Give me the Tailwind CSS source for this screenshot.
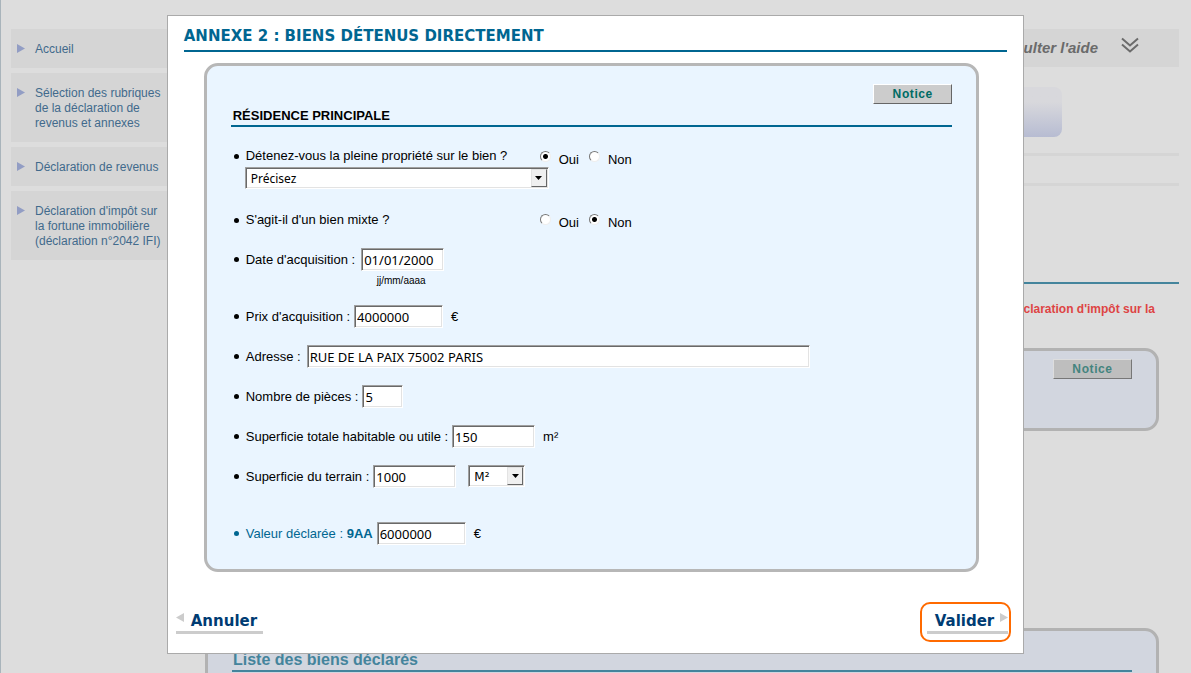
<!DOCTYPE html>
<html lang="fr">
<head>
<meta charset="utf-8">
<meta name="viewport" content="width=device-width, initial-scale=1">
<title>Annexe 2 : Biens détenus directement</title>
<script src="https://cdn.jsdelivr.net/npm/@tailwindcss/browser@4"></script>
</head>
<body class="h-screen overflow-hidden bg-[#ddd] font-['Liberation_Sans',Arial,sans-serif] text-[13px] leading-4 text-black">

<!-- Page behind the dialog -->
<div class="flex h-full gap-[18px] overflow-hidden border-l border-[#a9b4bb] pt-[29px] pr-3 pl-2.5">
  <nav class="w-44 shrink-0 text-[12px] leading-[15px] text-[#416a8c]" aria-label="Menu">
    <ul class="flex flex-col gap-[5px]">
      <li><a href="#" class="flex gap-2.5 bg-[#d5d5d5] pt-[13px] pr-2 pb-[11px] pl-1.5"><svg class="mt-0.5 h-[9px] w-2 shrink-0" viewBox="0 0 8 9"><path d="M0 0L8 4.500L0 9z" fill="#929dc4"/></svg><span>Accueil</span></a></li>
      <li><a href="#" class="flex gap-2.5 bg-[#d5d5d5] pt-[13px] pr-2 pb-[11px] pl-1.5"><svg class="mt-0.5 h-[9px] w-2 shrink-0" viewBox="0 0 8 9"><path d="M0 0L8 4.500L0 9z" fill="#929dc4"/></svg><span>Sélection des rubriques<br>de la déclaration de<br>revenus et annexes</span></a></li>
      <li><a href="#" class="flex gap-2.5 bg-[#d5d5d5] pt-[13px] pr-2 pb-[11px] pl-1.5"><svg class="mt-0.5 h-[9px] w-2 shrink-0" viewBox="0 0 8 9"><path d="M0 0L8 4.500L0 9z" fill="#929dc4"/></svg><span>Déclaration de revenus</span></a></li>
      <li><a href="#" class="flex gap-2.5 bg-[#d5d5d5] pt-[13px] pr-2 pb-[11px] pl-1.5"><svg class="mt-0.5 h-[9px] w-2 shrink-0" viewBox="0 0 8 9"><path d="M0 0L8 4.500L0 9z" fill="#929dc4"/></svg><span>Déclaration d'impôt sur<br>la fortune immobilière<br>(déclaration n°2042 IFI)</span></a></li>
    </ul>
  </nav>

  <main class="flex min-w-0 flex-1 flex-col">
    <div class="flex h-[38px] shrink-0 items-center justify-end gap-[23px] bg-[#d5d5d5] pr-10">
      <a href="#" class="text-[15px] font-bold italic text-[#6b6b6b]">Consulter l'aide</a>
      <svg class="-mt-1.5 h-4 w-[18px]" viewBox="0 0 18 16" fill="none" stroke="#6b6b6b" stroke-width="2"><path d="M1 1.500L9 8.500L17 1.500M1 7.500L9 14.500L17 7.500"/></svg>
    </div>
    <div class="mt-5 mr-[117px] h-[50px] shrink-0 rounded-lg bg-linear-to-b from-[#d8d8dc] from-30% to-[#b7bcd2]"></div>
    <div class="mt-4 h-[33px] shrink-0 border-y-3 border-[#d5d5d5]"></div>
    <div class="mt-[96px] h-0.5 shrink-0 bg-[#44849c]"></div>
    <p class="mt-[17px] pr-6 text-right text-[12px] font-bold text-[#de4444]">déclaration d'impôt sur la</p>
    <section class="mt-[31px] mr-5 flex h-[83px] shrink-0 items-start justify-end rounded-[14px] border-3 border-[#b2b2b2] bg-[#d2d6df] pt-2 pr-6">
      <button type="button" class="h-5 w-[79px] border border-t-[#ddd] border-r-[#777] border-b-[#777] border-l-[#ddd] bg-[#bebebe] text-[12px] leading-4 font-bold tracking-wider text-[#44847f]">Notice</button>
    </section>
    <section class="mt-[197px] mr-5 h-40 shrink-0 rounded-[14px] border-3 border-[#b2b2b2] bg-[#d2d6df] px-6 pt-5">
      <h2 class="border-b-2 border-[#44849c] pb-px pl-px text-[16px] leading-[18px] font-bold text-[#44849c]">Liste des biens déclarés</h2>
    </section>
  </main>
</div>

<!-- Dialog -->
<div class="fixed inset-0 flex items-start justify-center pt-[15px]">
  <form class="w-[72%] min-w-[600px] border border-[#aaa] bg-white pt-2.5" role="dialog" aria-labelledby="dialog-title">
    <h1 id="dialog-title" class="mx-4 border-b-2 border-[#006691] pb-1 font-['DejaVu_Sans',Verdana,sans-serif] text-[15px] leading-5 font-bold text-[#006691]">ANNEXE 2 : BIENS DÉTENUS DIRECTEMENT</h1>

    <section class="mt-[11px] mr-11 ml-9 rounded-[14px] border-3 border-[#b7b7b7] bg-[#eaf5ff] px-6 pt-[18px] pb-6">
      <div class="flex justify-end">
        <button type="button" class="h-5 w-[79px] border border-t-white border-r-[#666] border-b-[#666] border-l-white bg-[#ccc] text-[12px] leading-4 font-bold tracking-wider text-[#006b64]">Notice</button>
      </div>
      <h2 class="mt-1 border-b-2 border-[#006691] pb-px pl-0.5 text-[13px] leading-4 font-bold">RÉSIDENCE PRINCIPALE</h2>

      <div class="pl-[3px]">
        <fieldset class="mt-[21px] flex h-[19px] items-start">
          <span class="mt-1.5 mr-[7px] size-[5px] rounded-full bg-black"></span>
          <span class="w-[294px]">Détenez-vous la pleine propriété sur le bien ?</span>
          <input id="pp-oui" name="pp" type="radio" checked class="mt-[3px] size-[11px] appearance-none rounded-full border border-t-[#777] border-r-[#eee] border-b-[#eee] border-l-[#777] bg-white checked:bg-[radial-gradient(circle,#000_2px,#fff_3px)]">
          <label for="pp-oui" class="mt-1 ml-2">Oui</label>
          <input id="pp-non" name="pp" type="radio" class="mt-[3px] ml-2.5 size-[11px] appearance-none rounded-full border border-t-[#777] border-r-[#eee] border-b-[#eee] border-l-[#777] bg-white checked:bg-[radial-gradient(circle,#000_2px,#fff_3px)]">
          <label for="pp-non" class="mt-1 ml-2">Non</label>
        </fieldset>
        <div class="relative ml-[11px] h-[22px] w-[304px]">
          <select aria-label="Précisez" class="size-full appearance-none border border-t-[#a0a0a0] border-r-white border-b-white border-l-[#a0a0a0] bg-white pt-0.5 pl-[5px] font-['Noto_Sans',Tahoma,sans-serif] text-[12px] shadow-[inset_1px_1px_#696969,inset_-1px_-1px_#e3e3e3]"><option>Précisez</option></select>
          <span class="pointer-events-none absolute top-0.5 right-0.5 flex h-[18px] w-4 items-center justify-center border border-t-[#e3e3e3] border-r-[#666] border-b-[#666] border-l-[#e3e3e3] bg-[#f0f0f0]"><svg class="h-1 w-[7px]" viewBox="0 0 7 4"><path d="M0 0H7L3.500 4z"/></svg></span>
        </div>

        <fieldset class="mt-[23px] flex h-[19px] items-start">
          <span class="mt-1.5 mr-[7px] size-[5px] rounded-full bg-black"></span>
          <span class="w-[294px]">S'agit-il d'un bien mixte ?</span>
          <input id="mx-oui" name="mx" type="radio" class="mt-0.5 size-[11px] appearance-none rounded-full border border-t-[#777] border-r-[#eee] border-b-[#eee] border-l-[#777] bg-white checked:bg-[radial-gradient(circle,#000_2px,#fff_3px)]">
          <label for="mx-oui" class="mt-[3px] ml-2">Oui</label>
          <input id="mx-non" name="mx" type="radio" checked class="mt-0.5 ml-2.5 size-[11px] appearance-none rounded-full border border-t-[#777] border-r-[#eee] border-b-[#eee] border-l-[#777] bg-white checked:bg-[radial-gradient(circle,#000_2px,#fff_3px)]">
          <label for="mx-non" class="mt-[3px] ml-2">Non</label>
        </fieldset>

        <div class="mt-[17px] flex h-[23px] items-center">
          <span class="mr-[7px] size-[5px] rounded-full bg-black"></span>
          <label for="date" class="mr-1.5">Date d'acquisition :</label>
          <input id="date" value="01/01/2000" class="h-[23px] w-[83px] border border-t-[#a0a0a0] border-r-white border-b-white border-l-[#a0a0a0] bg-white pl-0.5 font-['Noto_Sans',Tahoma,sans-serif] text-[13px] shadow-[inset_1px_1px_#696969,inset_-1px_-1px_#e3e3e3]">
        </div>
        <p class="ml-[143px] h-[34px] pt-[3px] text-[10px] leading-[14px]">jj/mm/aaaa</p>

        <div class="flex flex-col gap-[17px]">
          <div class="flex h-[23px] items-center">
            <span class="mr-[7px] size-[5px] rounded-full bg-black"></span>
            <label for="prix" class="mr-1 pt-px">Prix d'acquisition :</label>
            <input id="prix" value="4000000" class="h-[23px] w-[89px] border border-t-[#a0a0a0] border-r-white border-b-white border-l-[#a0a0a0] bg-white pl-0.5 font-['Noto_Sans',Tahoma,sans-serif] text-[13px] shadow-[inset_1px_1px_#696969,inset_-1px_-1px_#e3e3e3]">
            <span class="ml-2">€</span>
          </div>
          <div class="flex h-[23px] items-center">
            <span class="mr-[7px] size-[5px] rounded-full bg-black"></span>
            <label for="adresse" class="mr-1.5">Adresse :</label>
            <input id="adresse" value="RUE DE LA PAIX 75002 PARIS" class="h-[23px] w-[503px] border border-t-[#a0a0a0] border-r-white border-b-white border-l-[#a0a0a0] bg-white pl-0.5 font-['Noto_Sans',Tahoma,sans-serif] text-[13px] shadow-[inset_1px_1px_#696969,inset_-1px_-1px_#e3e3e3]">
          </div>
          <div class="flex h-[23px] items-center">
            <span class="mr-[7px] size-[5px] rounded-full bg-black"></span>
            <label for="pieces" class="mr-1 pt-px">Nombre de pièces :</label>
            <input id="pieces" value="5" class="h-[23px] w-[41px] border border-t-[#a0a0a0] border-r-white border-b-white border-l-[#a0a0a0] bg-white pl-0.5 font-['Noto_Sans',Tahoma,sans-serif] text-[13px] shadow-[inset_1px_1px_#696969,inset_-1px_-1px_#e3e3e3]">
          </div>
          <div class="flex h-[23px] items-center">
            <span class="mr-[7px] size-[5px] rounded-full bg-black"></span>
            <label for="surface" class="mr-1 pt-px">Superficie totale habitable ou utile :</label>
            <input id="surface" value="150" class="h-[23px] w-[83px] border border-t-[#a0a0a0] border-r-white border-b-white border-l-[#a0a0a0] bg-white pl-0.5 font-['Noto_Sans',Tahoma,sans-serif] text-[13px] shadow-[inset_1px_1px_#696969,inset_-1px_-1px_#e3e3e3]">
            <span class="ml-2">m²</span>
          </div>
          <div class="flex h-[23px] items-center">
            <span class="mr-[7px] size-[5px] rounded-full bg-black"></span>
            <label for="terrain" class="mr-1 pt-px">Superficie du terrain :</label>
            <input id="terrain" value="1000" class="h-[23px] w-[83px] border border-t-[#a0a0a0] border-r-white border-b-white border-l-[#a0a0a0] bg-white pl-0.5 font-['Noto_Sans',Tahoma,sans-serif] text-[13px] shadow-[inset_1px_1px_#696969,inset_-1px_-1px_#e3e3e3]">
            <div class="relative ml-3 h-[22px] w-[57px] self-start">
              <select aria-label="Unité" class="size-full appearance-none border border-t-[#a0a0a0] border-r-white border-b-white border-l-[#a0a0a0] bg-white pt-0.5 pl-[5px] font-['DejaVu_Sans',Verdana,sans-serif] text-[12px] shadow-[inset_1px_1px_#696969,inset_-1px_-1px_#e3e3e3]"><option>M²</option></select>
              <span class="pointer-events-none absolute top-0.5 right-0.5 flex h-[18px] w-4 items-center justify-center border border-t-[#e3e3e3] border-r-[#666] border-b-[#666] border-l-[#e3e3e3] bg-[#f0f0f0]"><svg class="h-1 w-[7px]" viewBox="0 0 7 4"><path d="M0 0H7L3.500 4z"/></svg></span>
            </div>
          </div>
        </div>

        <div class="mt-[34px] flex h-[23px] items-center">
          <span class="mr-[7px] size-[5px] rounded-full bg-[#006691]"></span>
          <label for="valeur" class="mr-1 text-[#006691]">Valeur déclarée : <b>9AA</b></label>
          <input id="valeur" value="6000000" class="h-[23px] w-[89px] border border-t-[#a0a0a0] border-r-white border-b-white border-l-[#a0a0a0] bg-white pl-0.5 font-['Noto_Sans',Tahoma,sans-serif] text-[13px] shadow-[inset_1px_1px_#696969,inset_-1px_-1px_#e3e3e3]">
          <span class="ml-2">€</span>
        </div>
      </div>
    </section>

    <div class="mt-[30px] mb-[11px] flex items-start justify-between pr-3 pl-2 font-['DejaVu_Sans',Verdana,sans-serif] text-[15px] leading-5 font-bold text-[#003c73]">
      <button type="button" class="mt-[9px] flex gap-[7px] border-b-3 border-[#ccc] pr-1.5"><svg class="mt-0.5 h-[9px] w-2" viewBox="0 0 8 9"><path d="M8 0L0 4.500L8 9z" fill="#ccc"/></svg>Annuler</button>
      <div class="rounded-[10px] border-2 border-[#ff6a00] pt-[7px] pr-px pb-1.5 pl-[5px]">
        <button type="submit" class="flex gap-1.5 border-b-3 border-[#ccc] pl-2"><span>Valider</span><svg class="mt-0.5 h-[9px] w-2" viewBox="0 0 8 9"><path d="M0 0L8 4.500L0 9z" fill="#ccc"/></svg></button>
      </div>
    </div>
  </form>
</div>
</body>
</html>
